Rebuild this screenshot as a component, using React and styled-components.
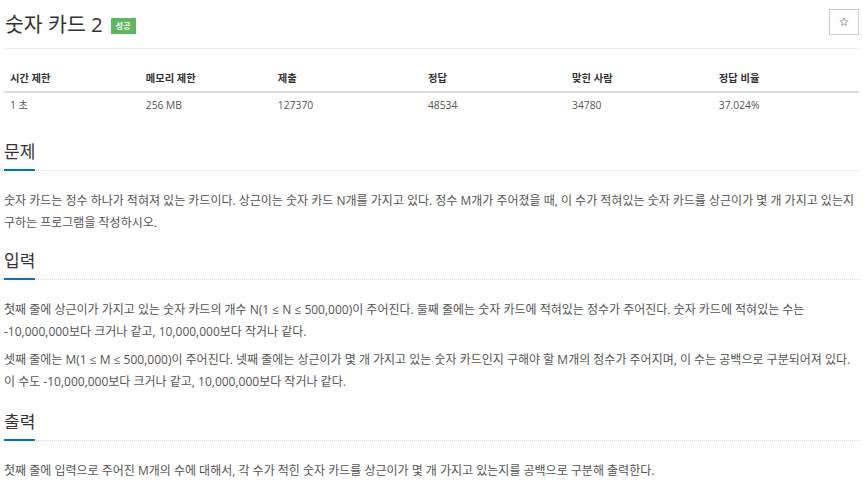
import React from 'react'
import styled, { createGlobalStyle } from 'styled-components'

const Global = createGlobalStyle`
  body {
    margin: 0;
    background: #fff;
    font-family: "Open Sans", "Noto Sans CJK KR", sans-serif;
    color: #555;
  }
`

const Page = styled.div`
  padding: 0 4px;
`

const TitleBar = styled.div`
  display: flex;
  align-items: center;
  justify-content: space-between;
  height: 48px;
  border-bottom: 1px solid #eee;
`

const Title = styled.h1`
  margin: 0;
  display: flex;
  align-items: flex-end;
  gap: 8px;
  font-size: 20.5px;
  font-weight: 400;
  color: #333;
  line-height: 28px;
  padding-left: 1px;
`

const Badge = styled.span`
  display: inline-block;
  background: #5cb85c;
  color: #fff;
  font-size: 8px;
  font-weight: 700;
  line-height: 16px;
  padding: 0 5px;
  margin-bottom: 4px;
`

const StarButton = styled.button`
  align-self: flex-start;
  margin-top: 9px;
  width: 30px;
  height: 26px;
  border: 1px solid #ccc;
  background: #fff;
  color: #222;
  font-family: "DejaVu Sans", sans-serif;
  font-size: 12px;
  display: flex;
  align-items: center;
  justify-content: center;
  padding: 0;
`

const Table = styled.table`
  width: 100%;
  margin-top: 15px;
  border-collapse: collapse;
  font-size: 10.3px;
`

const Th = styled.th`
  text-align: left;
  font-weight: 700;
  color: #333;
  height: 27px;
  padding: 0 6px;
  border-bottom: 2px solid #ddd;
  width: ${p => p.$w}px;
`

const Td = styled.td`
  padding: 0 6px;
  height: 23px;
  color: #555;
`

const Section = styled.section`
  margin-top: ${p => p.$top}px;
`

const Headline = styled.div`
  border-bottom: 1px dotted #ddd;
`

const HeadText = styled.h2`
  display: inline-block;
  margin: 0 0 -1px;
  font-size: 17px;
  font-weight: 400;
  line-height: 24px;
  color: #333;
  padding-bottom: 5px;
  border-bottom: 2px solid #0076c0;
`

const Body = styled.div`
  margin-top: 19px;
`

const P = styled.p`
  margin: 0 0 7px;
  font-size: 12px;
  line-height: 21.5px;
  color: #555;
`

const cols = [
  ['시간 제한', '1 초', 137],
  ['메모리 제한', '256 MB', 132],
  ['제출', '127370', 150],
  ['정답', '48534', 144],
  ['맞힌 사람', '34780', 147],
  ['정답 비율', '37.024%', 145],
]

const sections = [
  {
    title: '문제',
    top: 24,
    paras: [
      '숫자 카드는 정수 하나가 적혀져 있는 카드이다. 상근이는 숫자 카드 N개를 가지고 있다. 정수 M개가 주어졌을 때, 이 수가 적혀있는 숫자 카드를 상근이가 몇 개 가지고 있는지 구하는 프로그램을 작성하시오.',
    ],
  },
  {
    title: '입력',
    top: 16,
    paras: [
      '첫째 줄에 상근이가 가지고 있는 숫자 카드의 개수 N(1 ≤ N ≤ 500,000)이 주어진다. 둘째 줄에는 숫자 카드에 적혀있는 정수가 주어진다. 숫자 카드에 적혀있는 수는 -10,000,000보다 크거나 같고, 10,000,000보다 작거나 같다.',
      '셋째 줄에는 M(1 ≤ M ≤ 500,000)이 주어진다. 넷째 줄에는 상근이가 몇 개 가지고 있는 숫자 카드인지 구해야 할 M개의 정수가 주어지며, 이 수는 공백으로 구분되어져 있다. 이 수도 -10,000,000보다 크거나 같고, 10,000,000보다 작거나 같다.',
    ],
  },
  {
    title: '출력',
    top: 18,
    paras: [
      '첫째 줄에 입력으로 주어진 M개의 수에 대해서, 각 수가 적힌 숫자 카드를 상근이가 몇 개 가지고 있는지를 공백으로 구분해 출력한다.',
    ],
  },
]

export default function App() {
  return (
    <Page>
      <Global />
      <TitleBar>
        <Title>
          <span>숫자 카드 2</span>
          <Badge>성공</Badge>
        </Title>
        <StarButton>☆</StarButton>
      </TitleBar>

      <Table>
        <thead>
          <tr>
            {cols.map(c => <Th key={c[0]} $w={c[2]}>{c[0]}</Th>)}
          </tr>
        </thead>
        <tbody>
          <tr>
            {cols.map(c => <Td key={c[0]}>{c[1]}</Td>)}
          </tr>
        </tbody>
      </Table>

      {sections.map(s => (
        <Section key={s.title} $top={s.top}>
          <Headline>
            <HeadText>{s.title}</HeadText>
          </Headline>
          <Body>
            {s.paras.map((t, i) => <P key={i}>{t}</P>)}
          </Body>
        </Section>
      ))}
    </Page>
  )
}
